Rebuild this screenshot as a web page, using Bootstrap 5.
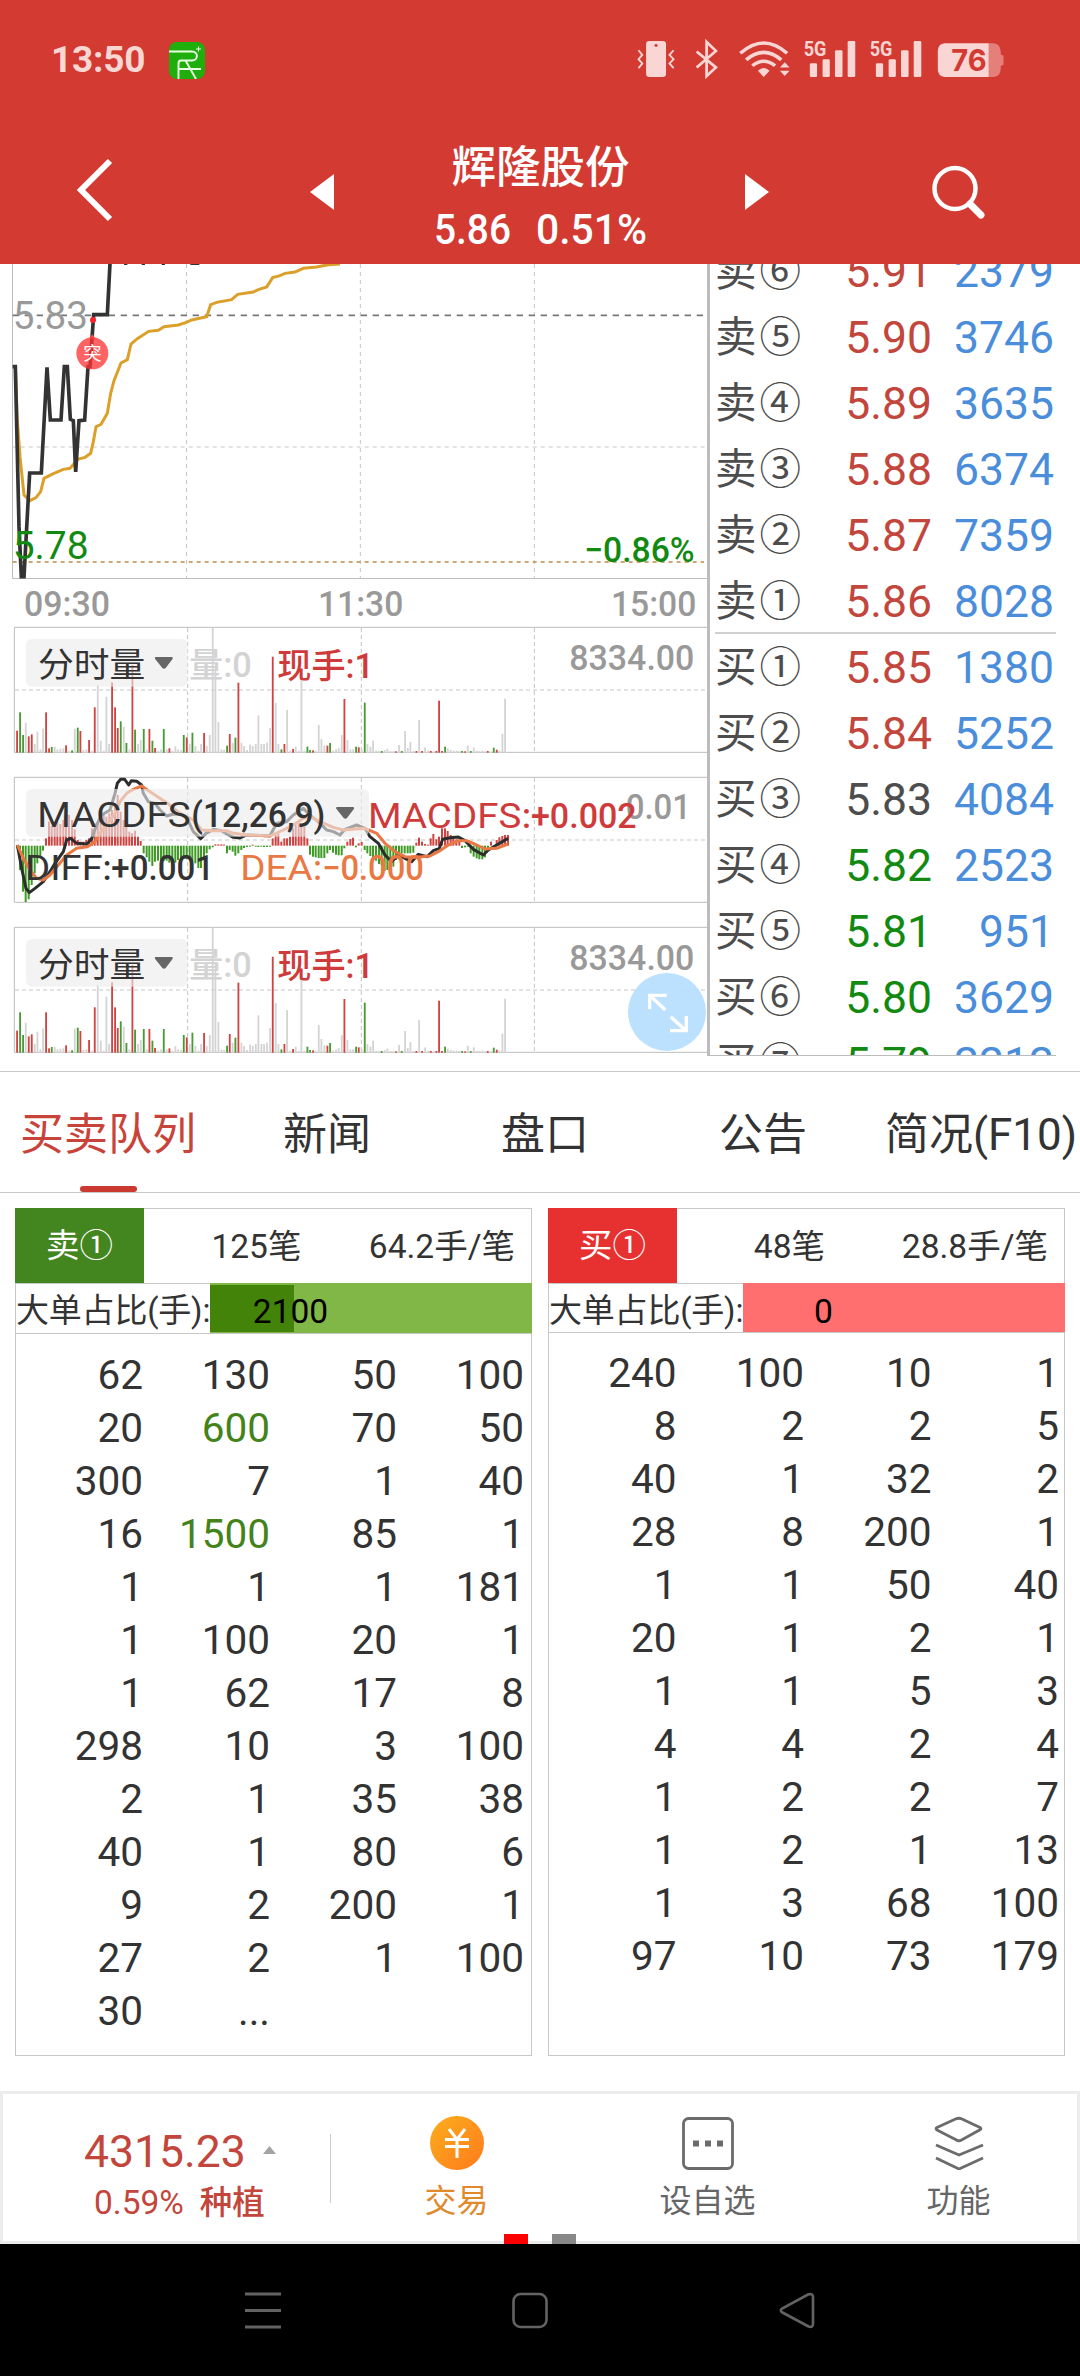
<!DOCTYPE html>
<html lang="zh-CN">
<head>
<meta charset="utf-8">
<meta name="viewport" content="width=device-width, initial-scale=1">
<title>辉隆股份 5.86</title>
<link rel="stylesheet" href="https://cdn.jsdelivr.net/npm/bootstrap@5.3.0/dist/css/bootstrap.min.css">
<style>
  body { width: 1080px; height: 2376px; overflow: hidden; font-family: Roboto, "Noto Sans CJK SC", sans-serif; color: #333; background: #fff; line-height: 1; }
  svg { display: block; flex: none; }
  .top-area { height: 264px; background: #d33a32; color: #fff; }
  .status-line { height: 116px; padding: 37px 72px 0 51px; }
  .clock { font-size: 37px; font-weight: 700; line-height: 45px; color: #fbd7d4; letter-spacing: -.2px; }
  .title-line { height: 148px; padding-left: 76px; }
  .title-block { width: 217px; margin-left: 98px; }
  .title-block svg { overflow: visible; }
  .stock-name { font-size: 44.5px; font-weight: 500; line-height: 50px; }
  .market { height: 792px; }
  .chart-side { width: 707px; }
  .book-side { width: 373px; border-left: 3px solid #bcbcbc; }
  .book-list { width: 346px; height: 792px; overflow: hidden; border-bottom: 1px solid #bbb; padding-left: 5px; }
  .book-inner { margin-top: -26px; }
  .book-line { height: 66px; line-height: 68px; font-size: 44.5px; }
  .book-line .lv { width: 118px; font-size: 41.5px; letter-spacing: 3px; color: #4d4d4d; white-space: nowrap; }
  .book-line .pr { width: 99px; text-align: right; }
  .book-line .vo { width: 122px; text-align: right; color: #4a8ddb; }
  .book-split { box-shadow: 0 -2px #d0d0d0; }
  .up { color: #c2463c; } .down { color: #128a12; } .flat { color: #4d4d4d; }
  .tab-strip { margin-top: 15px; height: 122px; border-top: 1px solid #c8c8c8; border-bottom: 1px solid #c8c8c8; overflow: hidden; }
  .tab-strip .nav-link { flex: none; width: 218px; padding: 0; font-size: 44px; line-height: 126px; height: 120px; color: #333; text-align: center; white-space: nowrap; position: relative; }
  .tab-strip .nav-link:first-child { text-indent: -2px; }
  .tab-strip .nav-link.active { color: #c8433a; }
  .tab-strip .nav-link.active::after { content: ""; position: absolute; left: 80px; bottom: 0; width: 57px; height: 6px; border-radius: 3px; background: #cc3931; }
  .queues { padding: 15px 15px 0; gap: 16px; height: 898px; }
  .queue { height: 848px; width: 517px; border: 1px solid #c8c8c8; font-size: 33.5px; }
  .queue-head { height: 75px; border-bottom: 1px solid #c8c8c8; line-height: 36px; }
  .queue-head > div { padding-top: 1px; }
  .side-tag { width: 129px; height: 75px; margin: -1px 0 0 -1px; color: #fff; }
  .tag-sell { background: #43851f; } .tag-buy { background: #e73030; }
  .ratio-line { height: 50px; border-bottom: 1px solid #c8c8c8; }
  .ratio-line.short { height: 49px; }
  .ratio-name { width: 194px; font-size: 33px; line-height: 54px; white-space: nowrap; letter-spacing: -.2px; }
  .ratio-bar { height: 50px; border-radius: 0; margin: -1px -1px 0 0; background: #80b746; position: relative; font-size: inherit; }
  .ratio-bar.red { background: #ff6f6f; }
  .ratio-bar .progress-bar { background: #43830a; height: 47px; margin-top: 2px; }
  .ratio-num { position: absolute; left: 0; width: 161px; line-height: 57px; text-align: center; color: #000; }
  .lots { padding: 15px 7px 0 0; }
  .lots.short { padding: 14px 5px 0 0; }
  .lots .lot { flex: 0 0 25%; height: 53px; line-height: 53px; font-size: 40.5px; text-align: right; }
  .lots .big { color: #43831a; }
  .foot-bar { height: 153px; border: 3px solid #ececec; position: relative; }
  .index-box { width: 327px; }
  .index-val { font-size: 44.5px; line-height: 50px; color: #c2463c; }
  .index-sub { font-size: 33.5px; line-height: 38px; color: #c2463c; }
  .foot-rule { width: 1px; height: 69px; background: #ccc; }
  .foot-item { width: 251px; font-size: 32px; color: #666; padding-top: 22px; }
  .foot-item span { line-height: 38px; margin-top: 12px; }
  .pager-dots { position: absolute; left: 501px; bottom: -3px; gap: 24px; }
  .pager-dots i { width: 24px; height: 10px; background: #888; }
  .pager-dots i.on { background: #f00; }
  .sys-bar { height: 132px; background: #000; padding: 0 149px 0 129px; }
</style>
<script src="https://cdn.jsdelivr.net/npm/bootstrap@5.3.0/dist/js/bootstrap.bundle.min.js"></script>
</head>
<body>
<header class="top-area">
  <div class="status-line d-flex justify-content-between align-items-start">
    <div class="d-flex align-items-start">
      <span class="clock">13:50</span>
      <svg width="36" height="37" viewBox="0 0 36 37" style="margin:5px 0 0 24px"><rect width="36" height="37" rx="8" fill="#1fae0b"/><g fill="none" stroke="#e9ffe4" stroke-width="1.9"><path d="M0 9.5H23C29.500 9.500 29.500 18.500 23 18.500H12Q9.500 18.500 9.500 22V37M16.500 18.500L27 37M9.500 27H32"/><path d="M29.500 4.500V9.500M27 7H32" stroke-width="1.100"/></g></svg>
    </div>
    <svg width="375" height="43" viewBox="270 110 1090 130" preserveAspectRatio="none" fill="#f9d6d3">
      <rect x="308" y="122" width="58" height="109" rx="10"/><circle cx="337" cy="136" r="4.500" fill="#d33a32"/>
      <path d="M286 150L297 164L286 177L297 190L286 204M388 150L376 164L388 177L376 190L388 204" fill="none" stroke="#f9d6d3" stroke-width="5.500"/>
      <path d="M455 154L511 202L484 228V125L511 152L455 202" fill="none" stroke="#f9d6d3" stroke-width="8"/>
      <g fill="none" stroke="#f9d6d3" stroke-width="10.500"><path d="M582 159Q650 97 718 159"/><path d="M599 179Q650 134 701 179"/><path d="M617 197Q650 170 683 197"/></g>
      <path d="M633 212Q650 196 667 212L650 231ZM697 202L711 186L725 202ZM697 212H725L711 228Z"/>
      <g id="sig"><text x="766" y="167" font-size="60" font-weight="700" textLength="66" lengthAdjust="spacingAndGlyphs">5G</text>
      <rect x="784" y="189" width="21" height="42" rx="4"/><rect x="821" y="177" width="21" height="54" rx="4"/><rect x="857" y="150" width="22" height="81" rx="4"/><rect x="894" y="122" width="22" height="109" rx="4"/></g>
      <use href="#sig" x="192"/>
      <path d="M1304 129H1318Q1338 131 1339 155V163L1347 167V194L1339 198V206Q1338 229 1318 231H1304Z" fill="#e47f79"/>
      <path d="M1176 129H1304V231H1176Q1156 229 1156 207V153Q1156 131 1176 129Z"/>
      <text x="1195" y="214" font-family="Inter,Roboto,sans-serif" font-size="91" font-weight="700" fill="#d33a32" textLength="103" lengthAdjust="spacingAndGlyphs">76</text>
    </svg>
  </div>
  <div class="title-line d-flex align-items-start">
    <svg width="38" height="68" viewBox="0 0 38 68" style="margin-top:39px"><path d="M34 6L5 35L34 64" fill="none" stroke="#fff" stroke-width="6"/></svg>
    <svg width="24" height="36" viewBox="0 0 24 36" style="margin:58px 0 0 196px"><path d="M24 0V36L0 18Z" fill="#fff"/></svg>
    <div class="title-block text-center" style="padding-top:27px">
      <div class="stock-name">辉隆股份</div>
      <svg width="217" height="44" viewBox="0 0 217 44" fill="#fff" font-size="42" font-weight="500" style="margin-top:14px"><text x="2" y="37" textLength="77" lengthAdjust="spacingAndGlyphs">5.86</text><text x="104" y="37" textLength="111" lengthAdjust="spacingAndGlyphs">0.51%</text></svg>
    </div>
    <svg width="24" height="36" viewBox="0 0 24 36" style="margin:58px 0 0 96px"><path d="M0 0V36L24 18Z" fill="#fff"/></svg>
    <svg width="54" height="58" viewBox="0 0 54 58" style="margin:47px 0 0 163px"><circle cx="23" cy="25.500" r="20.500" fill="none" stroke="#fff" stroke-width="4.500"/><path d="M38 41L49 52" stroke="#fff" stroke-width="7" stroke-linecap="round"/></svg>
  </div>
</header>

<main>
  <section class="market d-flex">
    <div class="chart-side" id="charts">
      <svg width="707" height="356" viewBox="0 12 2121 1068" fill="none">
        <path d="M37.500 12V955.500H2121" stroke="#bdbdbd" stroke-width="3"/>
        <path d="M559.500 12V955M1081 12V955M1603 12V955" stroke="#c4c4c4" stroke-width="3" stroke-dasharray="12 12"/>
        <path d="M38 561H2115" stroke="#dadada" stroke-width="4" stroke-dasharray="12 12"/>
        <path d="M38 166H2112" stroke="#777" stroke-width="5" stroke-dasharray="19 17"/>
        <path d="M38 906H2112" stroke="#bb8b45" stroke-width="5" stroke-dasharray="12 12"/>
        <text x="38" y="207" fill="#999" font-size="115" textLength="226" lengthAdjust="spacingAndGlyphs">5.83</text>
        <path d="M46 320L52 480L60 590L72 705L90 722L108 713L122 695L132 655L160 641L190 628L210 625L235 597L255 592L272 580L280 545L288 500L303 493L322 460L332 400L342 362L363 309L382 299L393 252L412 236L446 214L475 211L492 200L535 195L559 187L575 180L620 170L632 134L650 127L695 119L713 103L760 96L775 89L800 81L818 53L840 47L855 40L885 36L910 25L950 21L985 14L1020 12" stroke="#dba029" stroke-width="9"/>
        <path d="M38 320H46L57 800L64 950H72L89 639H124L141 322L151 480H183L193 320H202L211 478L220 482L227 636L237 482L254 480L264 320H270L281 164H322L330 10" stroke="#333" stroke-width="11"/>
        <path d="M372 12H382M425 12H435M485 12H495M571 12H598" stroke="#333" stroke-width="6"/>
        <path d="M268 236L277 222L286 236Z" fill="#ff4545"/><circle cx="277" cy="280" r="48" fill="#ff3434" fill-opacity=".77"/><circle cx="279" cy="180" r="9" fill="#f8232b"/>
        <text x="277" y="300" font-size="55" text-anchor="middle" fill="#fff">突</text>
        <text x="38" y="898" font-size="115" fill="#128a12" textLength="228" lengthAdjust="spacingAndGlyphs">5.78</text>
        <g font-size="106" font-weight="500">
          <text x="1752" y="905" fill="#128a12" textLength="332" lengthAdjust="spacingAndGlyphs">−0.86%</text>
          <g fill="#999"><text x="72" y="1067" textLength="258" lengthAdjust="spacingAndGlyphs">09:30</text><text x="954" y="1067" textLength="256" lengthAdjust="spacingAndGlyphs">11:30</text><text x="1833" y="1067" textLength="256" lengthAdjust="spacingAndGlyphs">15:00</text></g>
        </g>
      </svg>
      <svg width="707" height="150" viewBox="0 0 2121 450" fill="none" class="vol"></svg>
      <svg width="707" height="150" viewBox="0 450 2121 450" fill="none" class="macd"></svg>
      <svg width="707" height="136" viewBox="0 0 2121 408" fill="none" class="vol last"></svg>
    </div>
    <div class="book-side"><div class="book-list"><div class="book-inner" id="book"></div></div></div>
  </section>

  <nav class="nav flex-nowrap tab-strip">
    <a class="nav-link active">买卖队列</a><a class="nav-link">新闻</a><a class="nav-link">盘口</a><a class="nav-link">公告</a><a class="nav-link">简况(F10)</a>
  </nav>

  <section class="queues d-flex">
    <div class="queue">
      <div class="queue-head d-flex align-items-center">
        <div class="side-tag tag-sell d-flex align-items-center justify-content-center">卖①</div>
        <div class="flex-fill text-center">125笔</div><div class="pe-3">64.2手/笔</div>
      </div>
      <div class="ratio-line d-flex">
        <div class="ratio-name">大单占比(手):</div>
        <div class="ratio-bar progress flex-fill"><div class="progress-bar" style="width:26%"></div><span class="ratio-num">2100</span></div>
      </div>
      <div class="lots d-flex flex-wrap" id="sellLots"></div>
    </div>
    <div class="queue">
      <div class="queue-head d-flex align-items-center">
        <div class="side-tag tag-buy d-flex align-items-center justify-content-center">买①</div>
        <div class="flex-fill text-center">48笔</div><div class="pe-3">28.8手/笔</div>
      </div>
      <div class="ratio-line short d-flex">
        <div class="ratio-name">大单占比(手):</div>
        <div class="ratio-bar red progress flex-fill" style="height:49px"><span class="ratio-num">0</span></div>
      </div>
      <div class="lots short d-flex flex-wrap" id="buyLots"></div>
    </div>
  </section>
</main>

<footer>
  <div class="foot-bar d-flex">
    <div class="index-box flex-shrink-0" style="padding-top:33px">
      <div class="index-val d-flex" style="padding-left:81px">4315.23<svg width="13" height="8" viewBox="0 0 13 8" style="margin:19px 0 0 17px"><path d="M0 8H13L6.500 0Z" fill="#a3a3a3"/></svg></div>
      <div class="index-sub d-flex" style="padding:7px 0 0 91px">0.59%<span style="margin-left:16px;font-size:32.500px;font-weight:500">种植</span></div>
    </div>
    <div class="foot-rule flex-shrink-0" style="margin-top:40px"></div>
    <div class="foot-item flex-shrink-0 d-flex flex-column align-items-center" style="color:#e08a2c">
      <svg width="54" height="54" viewBox="0 0 54 54"><defs><linearGradient id="coin" x1="0" y1="0" x2="1" y2="1"><stop stop-color="#fbae1c"/><stop offset="1" stop-color="#ff7a1c"/></linearGradient></defs><circle cx="27" cy="27" r="27" fill="url(#coin)"/><path d="M19 13L27 23.500L35 13M15 23.500H39M15 30.500H39M27 23V42" fill="none" stroke="#fff" stroke-width="3"/></svg>
      <span>交易</span>
    </div>
    <div class="foot-item flex-shrink-0 d-flex flex-column align-items-center">
      <svg width="54" height="54" viewBox="0 0 54 54"><rect x="2.500" y="2.500" width="49" height="50" rx="5" fill="none" stroke="#6b6b6b" stroke-width="2.800"/><path d="M12 24.500h6v6h-6zM24 24.500h6v6h-6zM36 24.500h6v6h-6z" fill="#6b6b6b"/></svg>
      <span>设自选</span>
    </div>
    <div class="foot-item flex-shrink-0 d-flex flex-column align-items-center">
      <svg width="54" height="54" viewBox="0 0 54 54" fill="none" stroke="#6b6b6b" stroke-width="2.800" stroke-linejoin="round"><path d="M4 12.500Q4 12 5 11.500L23.500 3Q27 1.500 30 3L48 11.500Q50 12.800 48 13.800L29.500 24Q27 25.500 24.500 24L5 14Q4 13.500 4 12.500ZM4 29L27 39L51 29M4 42L27 53L51 42"/></svg>
      <span>功能</span>
    </div>
    <div class="pager-dots d-flex"><i class="on"></i><i></i></div>
  </div>
  <div class="sys-bar d-flex align-items-center">
    <div class="flex-fill d-flex justify-content-center w-100"><svg width="36" height="37" viewBox="0 0 36 37"><path d="M0 2H36M0 18.500H36M0 35H36" stroke="#636363" stroke-width="3"/></svg></div>
    <div class="flex-fill d-flex justify-content-center w-100"><svg width="36" height="37" viewBox="0 0 36 37"><rect x="1.500" y="2" width="33" height="33" rx="7" fill="none" stroke="#636363" stroke-width="2.600"/></svg></div>
    <div class="flex-fill d-flex justify-content-center w-100"><svg width="36" height="37" viewBox="0 0 36 37"><path d="M29 2.500Q34 1 34 5V32Q34 36 29.500 34.500L3.500 20.500Q0 18.500 3.500 16.300Z" fill="none" stroke="#636363" stroke-width="2.600"/></svg></div>
  </div>
</footer>

<script>
  // Order book
  const book = [['卖⑥','5.91','2379','up'],['卖⑤','5.90','3746','up'],['卖④','5.89','3635','up'],['卖③','5.88','6374','up'],['卖②','5.87','7359','up'],['卖①','5.86','8028','up'],
    ['买①','5.85','1380','up'],['买②','5.84','5252','up'],['买③','5.83','4084','flat'],['买④','5.82','2523','down'],['买⑤','5.81','951','down'],['买⑥','5.80','3629','down'],['买⑦','5.79','2212','down']];
  document.getElementById('book').innerHTML = book.map((b, i) =>
    `<div class="book-line d-flex${i === 6 ? ' book-split' : ''}"><span class="lv">${b[0]}</span><span class="pr ${b[3]}">${b[1]}</span><span class="vo">${b[2]}</span></div>`).join('');

  // Queue lots
  const lots = {
    sellLots: '62 130 50 100 20 600 70 50 300 7 1 40 16 1500 85 1 1 1 1 181 1 100 20 1 1 62 17 8 298 10 3 100 2 1 35 38 40 1 80 6 9 2 200 1 27 2 1 100 30 ...',
    buyLots: '240 100 10 1 8 2 2 5 40 1 32 2 28 8 200 1 1 1 50 40 20 1 2 1 1 1 5 3 4 4 2 4 1 2 2 7 1 2 1 13 1 3 68 100 97 10 73 179'
  };
  for (const id in lots) document.getElementById(id).innerHTML =
    lots[id].split(' ').map(n => `<span class="lot${+n >= 500 ? ' big' : ''}">${n}</span>`).join('');

  // Shared panel frame and grid
  const frame = (y) => `<path d="M2121 ${y+22}H43V${y+397}H2121" stroke="#bdbdbd" stroke-width="3"/>
    <path d="M563 ${y+24}V${y+397}M1084 ${y+24}V${y+397}M1603 ${y+24}V${y+397}" stroke="#c4c4c4" stroke-width="3" stroke-dasharray="12 9"/>
    <path d="M45 ${y+210}H2121" stroke="#dadada" stroke-width="4" stroke-dasharray="12 9"/>`;
  const label = (x, y, w, t, c, wt = 500, size = 106) =>
    `<text x="${x}" y="${y}" fill="${c}" font-size="${size}" font-weight="${wt}" textLength="${w}" lengthAdjust="spacingAndGlyphs">${t}</text>`;
  const tones = { r: '#cf4440', g: '#4a9a35', w: '#d4d4d4' };

  // Volume: x, top, tone
  const vol = '51 332r 60 277g 69 345g 77 308w 86 349r 95 343r 104 372w 112 335w 121 388w 129 326w 138 277r 147 385r 155 381g 164 381w 172 388w 181 386w 190 385w 198 376r 207 392w 216 391g 224 326w 233 323g 241 333r 250 390w 259 388w 267 360r 276 392w 284 262r 293 195w 302 362w 311 392w 319 230w 327 372w 336 187r 345 262r 353 324r 362 304g 371 320w 379 369g 388 388w 397 135r 405 329g 414 372w 422 360w 431 327g 440 388w 448 327r 457 362g 465 384r 474 392w 483 388w 491 327g 500 388w 508 385r 517 392w 526 379w 534 388w 543 390w 551 345g 560 352r 569 372w 577 338g 586 378w 595 392w 603 372w 612 339r 620 378w 629 345w 638 22w 646 150w 655 306w 664 388w 672 390w 681 377g 689 342r 698 368w 706 353g 715 188r 724 368w 732 378w 741 390w 750 374w 758 378w 767 372w 775 286w 784 372w 792 372w 801 368w 810 324w 818 110r 827 249w 835 372w 844 388g 853 372r 861 270w 870 392w 879 387r 887 380w 896 392w 904 170w 913 392w 922 380g 930 390g 939 391r 947 392w 956 315w 964 357w 973 376w 982 377r 990 369g 999 392w 1008 388w 1016 384w 1025 345w 1033 237r 1042 360w 1051 388w 1059 388w 1068 380g 1076 382r 1085 388w 1094 248g 1102 372w 1111 380w 1119 362w 1128 392w 1137 393w 1145 393g 1154 390w 1162 386w 1171 393w 1180 393w 1188 394r 1197 375w 1205 393g 1215 333w 1223 384w 1231 366w 1240 393w 1249 393r 1257 300w 1266 393r 1275 382w 1284 392w 1292 393r 1301 394w 1309 393r 1317 242r 1326 393r 1335 380g 1343 386w 1352 390w 1361 392w 1370 392w 1378 393w 1386 393g 1395 394r 1403 377w 1412 393g 1421 382w 1430 392w 1438 393w 1447 392w 1455 394w 1463 393r 1472 394w 1481 383g 1490 389r 1498 392w 1507 341w 1515 236w'
    .match(/\d+ \d+[rgw]/g);
  const chip = (y, w) => `<rect x="78" y="${y}" width="${w}" height="143" rx="18" fill="#ebebeb" fill-opacity=".62"/>`;
  const arrow = (x, y) => `<path d="M${x} ${y}H${x+50}Q${x+55} ${y+2} ${x+51} ${y+7}L${x+31} ${y+33}Q${x+26} ${y+38} ${x+21} ${y+33}L${x} ${y+7}Q${x-4} ${y+2} ${x} ${y}Z" fill="#666"/>`;
  document.querySelectorAll('.vol').forEach(s => {
    let h = frame(0);
    vol.forEach(v => { const m = v.match(/(\d+) (\d+)(.)/); h += `<rect x="${m[1]-2.5}" y="${m[2]}" width="5.500" height="${398-m[2]}" fill="${tones[m[3]]}"/>`; });
    h += chip(57, 485) + label(114, 172, 322, '分时量', '#333', 400, 104) + arrow(466, 111)
      + label(567, 172, 188, '量:0', '#d3d3d3', 500, 104) + label(832, 174, 290, '现手:1', '#cf3a3a', 500, 104)
      + label(1708, 149, 375, '8334.00', '#999');
    if (s.classList.contains('last')) h += `<circle cx="2001" cy="276" r="117" fill="#b5defe" fill-opacity=".9"/>
      <path d="M1949 268V226H2000M1949 226L1996 270M2012 290L2058 332M2059 288V332H2010" stroke="#fff" stroke-width="10"/>`;
    s.innerHTML = h;
  });

  // MACD: x, bar end; baseline at 677
  const macd = '52 685 60 750 69 815 77 846 86 838 95 795 104 760 112 730 121 712 129 692 138 655 147 605 155 618 164 610 172 607 181 612 190 600 198 590 207 585 216 600 224 628 233 660 241 665 250 665 259 660 267 655 276 625 284 610 293 605 302 590 311 585 319 590 328 580 336 570 345 550 353 525 362 575 371 600 379 615 388 635 396 640 405 632 414 650 422 663 431 700 440 712 448 725 457 738 465 725 474 722 483 722 491 722 500 722 508 728 517 735 526 728 534 720 543 716 551 715 560 718 569 720 577 724 586 730 595 744 603 744 612 712 620 700 629 688 638 682 646 673 655 673 664 673 672 674 681 700 689 690 698 695 706 707 715 700 724 690 732 684 741 681 750 680 758 674 767 680 775 681 784 680 792 681 801 681 810 680 818 655 827 645 835 640 844 665 853 655 861 655 870 650 879 625 887 615 896 610 904 612 913 620 922 655 930 704 939 710 947 712 956 714 964 714 973 714 982 700 990 690 999 698 1008 704 1016 706 1025 706 1033 685 1042 665 1051 657 1059 653 1068 682 1076 670 1085 666 1094 690 1102 700 1111 708 1119 715 1128 722 1137 732 1145 735 1154 753 1162 750 1171 745 1180 740 1188 720 1197 708 1205 700 1214 700 1223 700 1231 700 1240 698 1249 668 1257 653 1266 665 1275 672 1284 674 1292 655 1300 642 1309 658 1317 650 1326 625 1335 625 1343 633 1352 645 1360 655 1369 658 1378 660 1386 684 1395 682 1403 680 1412 700 1421 710 1430 715 1438 718 1447 718 1455 712 1464 690 1473 665 1481 680 1490 660 1498 652 1507 648 1515 645 1524 645'.split(' ').map(Number);
  let m = frame(450);
  for (let i = 0; i < macd.length; i += 2) {
    const y = macd[i+1], up = y < 677;
    m += `<rect x="${macd[i]-3}" y="${up ? y : 677}" width="6" height="${Math.abs(677-y)}" fill="${up ? '#cf4440' : '#3f9a26'}"/>`;
  }
  m += `<path d="M52 675L66 750L78 805L88 818L105 805L130 785L150 755L165 730L190 695L200 660L212 655L230 670L262 672L275 655L290 615L305 585L330 570L345 520L352 490L362 478L374 478L386 495L394 482L410 484L425 495L430 520L445 545L465 550L480 570L500 588L520 582L545 583L562 597L580 635L602 656L618 640L640 628L665 632L680 642L700 652L720 654L740 645L810 647L830 610L860 605L880 585L910 565L935 590L955 605L980 630L1000 635L1020 645L1035 628L1070 615L1095 625L1110 650L1135 670L1155 705L1175 725L1195 705L1215 715L1235 725L1255 703L1282 710L1300 692L1318 685L1328 658L1350 653L1375 651L1395 662L1420 688L1450 705L1465 690L1490 675L1524 655" stroke="#2d2d2d" stroke-width="9" stroke-linejoin="round"/>
    <path d="M52 675L70 715L90 750L110 775L130 780L150 765L175 735L200 705L230 685L262 680L285 665L300 640L325 610L345 580L360 545L380 520L400 508L425 498L450 515L500 548L540 580L580 600L605 630L640 632L680 632L700 640L740 645L810 648L850 630L880 615L910 595L930 590L960 605L1000 622L1030 630L1095 625L1130 640L1155 670L1185 695L1215 710L1250 712L1290 708L1315 695L1345 675L1375 662L1400 662L1430 675L1455 687L1490 685L1524 672" stroke="#e97844" stroke-width="9" stroke-linejoin="round"/>`;
  m += chip(507, 1029) + label(112, 622, 460, 'MACDFS', '#333', 400) + label(574, 622, 402, '(12,26,9)', '#333', 500) + arrow(1010, 561)
    + label(1877, 598, 196, '0.01', '#999')
    + label(1104, 624, 460, 'MACDFS', '#cf3a3a', 450) + label(1566, 624, 344, ':+0.002', '#cf3a3a')
    + label(76, 779, 232, 'DIFF', '#333', 400) + label(308, 779, 334, ':+0.001', '#333')
    + label(721, 779, 217, 'DEA', '#e97844', 400) + label(940, 779, 332, ':−0.000', '#e97844');
  document.querySelector('.macd').innerHTML = m;
</script>
</body>
</html>
